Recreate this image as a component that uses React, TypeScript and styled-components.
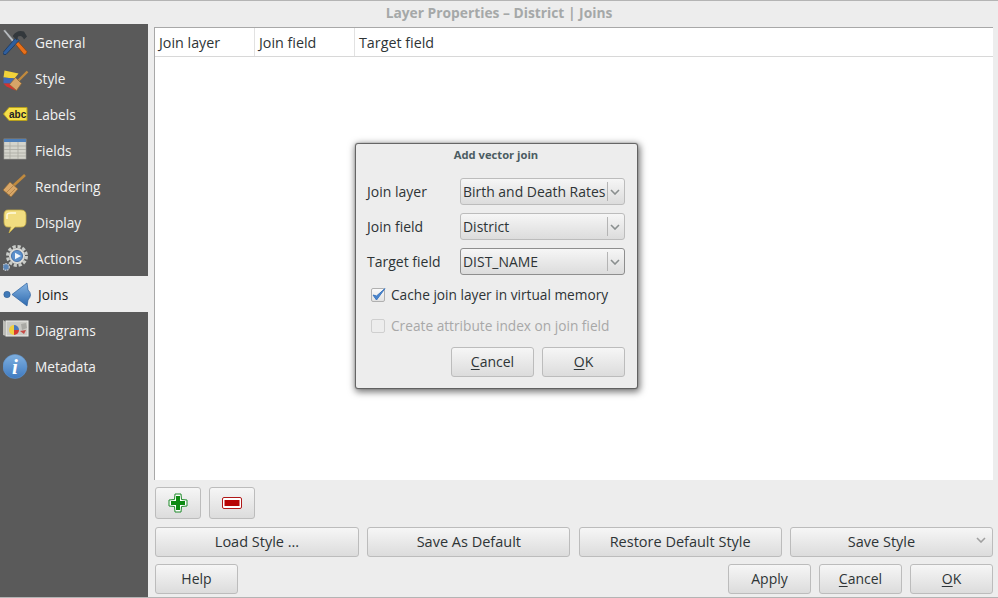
import styled, { createGlobalStyle } from 'styled-components'

const GlobalStyle = createGlobalStyle`
  html, body {
    margin: 0;
    padding: 0;
    background: #ededed;
  }
  body {
    font-family: "Open Sans", "Noto Sans", sans-serif;
    font-size: 13.7px;
    color: #2e3436;
  }
`

const GeneralIcon = () => (
  <svg width="28" height="28" viewBox="3 0.5 28 28">
    <path d="M3 2 L5 1 L17 15 L15 17 Z" fill="#b8bcc0" stroke="#555" strokeWidth="0.6" />
    <path d="M15 15 L18 13 L27 23 Q27 26 24 26 Z" fill="#e8701a" stroke="#8a3d08" strokeWidth="0.7" />
    <path d="M3 24 L16 9 L19 12 L6 26 Q3 27 3 24 Z" fill="#2f5f9e" stroke="#16325a" strokeWidth="0.7" />
    <path d="M13 7 Q17 1 24 3 L27 8 L24 11 Q22 6 18 8 L17 12 L13 8 Z" fill="#33383c" />
  </svg>
)

const StyleIcon = () => (
  <svg width="28" height="28" viewBox="2.5 -1.5 28 28">
    <path d="M4 4 L18 7 L14 12 L3 11 Z" fill="#f2d33a" />
    <path d="M3 11 L14 12 L13 17 L3 17 Z" fill="#3f69b5" />
    <path d="M3 17 L13 17 L15 24 L6 20 Z" fill="#d8322e" />
    <path d="M27 5 L18 14" stroke="#c08a3e" strokeWidth="2.4" />
    <path d="M15 11 L21 17 L16 24 L9 18 Z" fill="#d6a468" stroke="#8d6630" strokeWidth="0.7" />
  </svg>
)

const LabelsIcon = () => (
  <svg width="28" height="28" viewBox="0 0 28 28">
    <path d="M0.5 13 L6 6.5 H24 V19.5 H6 Z" fill="#f6e04a" stroke="#b7a01c" strokeWidth="1" />
    <text x="6" y="17" fontFamily="Liberation Sans, sans-serif" fontSize="10" fontWeight="700" fill="#222">abc</text>
  </svg>
)

const FieldsIcon = () => (
  <svg width="28" height="28" viewBox="3 1 28 28">
    <rect x="4" y="3" width="22" height="20" fill="#d4d4cc" stroke="#a5a5a0" strokeWidth="0.6" />
    <rect x="4" y="3" width="22" height="3" fill="#4f7fb8" />
    <path d="M4 10 H26 M4 13.5 H26 M4 17 H26 M4 20 H26 M10 6 V23 M18 6 V23" stroke="#a9a9a2" strokeWidth="0.8" />
  </svg>
)

const RenderingIcon = () => (
  <svg width="28" height="28" viewBox="3 1 28 28">
    <path d="M25 3 L13 14" stroke="#c08a3e" strokeWidth="2.6" />
    <path d="M10 10 L18 17 L11 25 L3 18 Z" fill="#d9a768" stroke="#8d6630" strokeWidth="0.7" />
    <path d="M6 21 L13 14 M9 23 L15 17" stroke="#a87a3e" strokeWidth="0.7" />
  </svg>
)

const DisplayIcon = () => (
  <svg width="28" height="28" viewBox="3 0 28 28">
    <path d="M8 1 H21 Q26 1 26 6 V13 Q26 18 21 18 H15 L9 24 L11 18 H8 Q4 18 4 13 V6 Q4 1 8 1 Z" fill="#f1dd80" stroke="#c7ae48" strokeWidth="0.8" />
    <path d="M7 10 V6 Q7 4 11 4 H16" stroke="#fffbe0" strokeWidth="1.4" fill="none" />
  </svg>
)

const ActionsIcon = () => (
  <svg width="28" height="28" viewBox="3 1 28 28">
    <circle cx="17" cy="12" r="9.5" fill="none" stroke="#c9ccc9" strokeWidth="3" strokeDasharray="3.2 1.8" />
    <circle cx="17" cy="12" r="8" fill="#d8d8d4" />
    <circle cx="17" cy="12" r="5.6" fill="#5b90cc" stroke="#2f5f9e" strokeWidth="0.7" />
    <path d="M15 8.8 L21 12 L15 15.2 Z" fill="#f2f6fb" />
    <circle cx="6" cy="23" r="3.3" fill="#5b86b8" stroke="#b9bdc2" strokeWidth="1.4" strokeDasharray="1.6 0.8" />
  </svg>
)

const JoinsIcon = () => (
  <svg width="32" height="28" viewBox="3 0 32 28">
    <defs>
      <linearGradient id="joinArrow" x1="0" y1="0" x2="0" y2="1">
        <stop offset="0" stopColor="#86b4e2" />
        <stop offset="1" stopColor="#2f6bb0" />
      </linearGradient>
    </defs>
    <circle cx="7" cy="13.5" r="3.2" fill="#3f79b8" stroke="#2a5788" strokeWidth="0.5" />
    <path d="M12 13.5 L27 2 L28 9 Q33 13.5 28 19 L27 25 Z" fill="url(#joinArrow)" stroke="#2a5f9e" strokeWidth="0.7" strokeLinejoin="round" />
  </svg>
)

const DiagramsIcon = () => (
  <svg width="28" height="28" viewBox="0 0 28 28">
    <rect x="3" y="4" width="22" height="15" fill="#c9c9c4" stroke="#f0f0ec" strokeWidth="1" />
    <path d="M3 5 L0 3 V18 L3 19 Z" fill="#bdbdb8" />
    <path d="M11 8 A5 5 0 0 0 11 18 V13 Z" fill="#f0d040" />
    <path d="M11 8 A5 5 0 0 1 16 13 H11 Z" fill="#4a78bc" />
    <path d="M11 13 H16 A5 5 0 0 1 11 18 Z" fill="#d63a30" />
    <path d="M18 7 L23 6 L24 11 L19 13 Z" fill="#a9a9a4" />
    <path d="M17 14 L23 13 L21 17 Z" fill="#c74a44" />
  </svg>
)

const MetadataIcon = () => (
  <svg width="28" height="28" viewBox="3 0.5 28 28">
    <defs>
      <linearGradient id="infoBall" x1="0" y1="0" x2="0" y2="1">
        <stop offset="0" stopColor="#7fb0e0" />
        <stop offset="1" stopColor="#3f7ac0" />
      </linearGradient>
    </defs>
    <circle cx="15" cy="14" r="12" fill="url(#infoBall)" stroke="#5f93cc" strokeWidth="0.6" />
    <text x="15" y="21" textAnchor="middle" fontFamily="Liberation Serif, serif" fontStyle="italic" fontWeight="700" fontSize="21" fill="#fff">i</text>
  </svg>
)

const Chevron = ({ color = '#8a8f8f' }: { color?: string }) => (
  <svg width="10" height="6" viewBox="0 0 10 6">
    <path d="M1 1 L5 5 L9 1" fill="none" stroke={color} strokeWidth="1.6" />
  </svg>
)

const PlusIcon = () => (
  <svg width="20" height="20" viewBox="0 0 20 20">
    <path d="M7 1 H13 L13.5 6.5 L19 7 V13 L13.5 13.5 L13 19 H7 L6.5 13.5 L1 13 V7 L6.5 6.5 Z" fill="#fff" stroke="#1f8a2a" strokeWidth="1" strokeLinejoin="round" />
    <path d="M8 3 H12 V8 H17 V12 H12 V17 H8 V12 H3 V8 H8 Z" fill="#0d8a12" />
  </svg>
)

const MinusIcon = () => (
  <svg width="20" height="12" viewBox="0 0 20 12">
    <rect x="0.5" y="0.5" width="19" height="11" rx="1.5" fill="#fff" stroke="#b01818" />
    <rect x="2.5" y="3" width="15" height="6" fill="#b80606" />
  </svg>
)

const CheckMark = () => (
  <svg width="14" height="14" viewBox="0 0 14 14" overflow="visible">
    <path d="M2 7 L5.5 12 L14 0.5 L5.5 8 Z" fill="#4a86cf" stroke="#3f78c0" strokeWidth="1" strokeLinejoin="round" />
  </svg>
)

const navItems = [
  { label: 'General', icon: <GeneralIcon /> },
  { label: 'Style', icon: <StyleIcon /> },
  { label: 'Labels', icon: <LabelsIcon /> },
  { label: 'Fields', icon: <FieldsIcon /> },
  { label: 'Rendering', icon: <RenderingIcon /> },
  { label: 'Display', icon: <DisplayIcon /> },
  { label: 'Actions', icon: <ActionsIcon /> },
  { label: 'Joins', icon: <JoinsIcon />, active: true },
  { label: 'Diagrams', icon: <DiagramsIcon /> },
  { label: 'Metadata', icon: <MetadataIcon /> },
]

function App() {
  return (
    <Window>
      <GlobalStyle />
      <TitleBar>Layer Properties – District | Joins</TitleBar>
      <Body>
        <Sidebar>
          {navItems.map((item) => (
            <NavItem key={item.label} $active={item.active}>
              <NavIcon>{item.icon}</NavIcon>
              <span>{item.label}</span>
            </NavItem>
          ))}
        </Sidebar>
        <Splitter />
        <Content>
          <Table>
            <TableHeader>
              <HeaderCell>Join layer</HeaderCell>
              <HeaderCell>Join field</HeaderCell>
              <HeaderCell>Target field</HeaderCell>
            </TableHeader>
          </Table>
          <ToolRow>
            <IconButton aria-label="Add"><PlusIcon /></IconButton>
            <IconButton aria-label="Remove"><MinusIcon /></IconButton>
          </ToolRow>
          <StyleRow>
            <StyleButton>Load Style ...</StyleButton>
            <StyleButton>Save As Default</StyleButton>
            <StyleButton>Restore Default Style</StyleButton>
            <StyleButton $menu>
              Save Style
              <MenuArrow><Chevron color="#a0a0a0" /></MenuArrow>
            </StyleButton>
          </StyleRow>
          <ActionRow>
            <DialogButton>Help</DialogButton>
            <ActionRight>
              <DialogButton>Apply</DialogButton>
              <DialogButton><u>C</u>ancel</DialogButton>
              <DialogButton><u>O</u>K</DialogButton>
            </ActionRight>
          </ActionRow>
        </Content>
      </Body>
      <JoinDialog>
        <DialogTitle>Add vector join</DialogTitle>
        <FormGrid>
          <FieldLabel>Join layer</FieldLabel>
          <Combo>
            <ComboText>Birth and Death Rates</ComboText>
            <ComboArrow><Chevron /></ComboArrow>
          </Combo>
          <FieldLabel>Join field</FieldLabel>
          <Combo>
            <ComboText>District</ComboText>
            <ComboArrow><Chevron /></ComboArrow>
          </Combo>
          <FieldLabel>Target field</FieldLabel>
          <Combo $focused>
            <ComboText>DIST_NAME</ComboText>
            <ComboArrow><Chevron /></ComboArrow>
          </Combo>
        </FormGrid>
        <CheckRow>
          <CheckBox><CheckMark /></CheckBox>
          Cache join layer in virtual memory
        </CheckRow>
        <CheckRow $disabled>
          <CheckBox $disabled />
          Create attribute index on join field
        </CheckRow>
        <DialogActions>
          <DialogButton><u>C</u>ancel</DialogButton>
          <DialogButton><u>O</u>K</DialogButton>
        </DialogActions>
      </JoinDialog>
    </Window>
  )
}

const Window = styled.div`
  position: relative;
  width: 998px;
  height: 598px;
  box-sizing: border-box;
  overflow: hidden;
  display: flex;
  flex-direction: column;
  background: #ededed;
  border-bottom: 1px solid #b4b4b4;
`

const TitleBar = styled.div`
  height: 22px;
  flex: none;
  padding-bottom: 1px;
  border-top: 1px solid #b4b4b4;
  display: flex;
  align-items: center;
  justify-content: center;
  font-weight: 700;
  font-size: 13.8px;
  color: #a5a8a8;
`

const Body = styled.div`
  flex: 1;
  display: flex;
  min-height: 0;
`

const Sidebar = styled.nav`
  width: 148px;
  flex: none;
  background: #5a5a5a;
`

const NavItem = styled.div<{ $active?: boolean }>`
  height: 36px;
  display: flex;
  align-items: center;
  gap: ${(p) => (p.$active ? '3px' : '4px')};
  padding-left: 3px;
  box-sizing: border-box;
  background: ${(p) => (p.$active ? '#ededed' : 'transparent')};
  color: ${(p) => (p.$active ? '#1c1c1c' : '#f2f2f2')};
`

const NavIcon = styled.span`
  display: flex;
  flex: none;
  min-width: 28px;
  height: 28px;
  margin-top: 2px;
`

const Splitter = styled.div`
  width: 6px;
  flex: none;
  background-image: radial-gradient(#d2d2d2 0.6px, transparent 0.7px);
  background-size: 2px 2px;
`

const Content = styled.div`
  flex: 1;
  min-width: 0;
  display: flex;
  flex-direction: column;
  padding: 3px 5px 3px 0;
`

const Table = styled.div`
  height: 453px;
  flex: none;
  box-sizing: border-box;
  background: #fff;
  border-top: 1px solid #a8a8a8;
  border-left: 1px solid #a8a8a8;
`

const TableHeader = styled.div`
  height: 28px;
  display: flex;
  border-bottom: 1px solid #d8d8d8;
`

const HeaderCell = styled.div`
  width: 100px;
  box-sizing: border-box;
  padding-left: 4px;
  display: flex;
  align-items: center;
  border-right: 1px solid #e2e2e2;
  color: #2e3436;
  font-size: 14.3px;

  &:last-child {
    flex: 1;
    border-right: none;
  }
`

const PushButton = styled.button`
  position: relative;
  height: 30px;
  box-sizing: border-box;
  padding: 0;
  border: 1px solid #bcbcbc;
  border-radius: 3px;
  background: linear-gradient(#f6f6f6, #dcdcdc);
  color: #2e3436;
  font: inherit;
  display: flex;
  align-items: center;
  justify-content: center;

  u {
    text-underline-offset: 2px;
  }
`

const ToolRow = styled.div`
  display: flex;
  gap: 8px;
  margin: 7px 0 8px 1px;
`

const IconButton = styled(PushButton)`
  width: 46px;
  height: 32px;
`

const StyleRow = styled.div`
  display: grid;
  grid-template-columns: 204px 203px 203px 203px;
  justify-content: space-between;
  margin-left: 1px;
`

const StyleButton = styled(PushButton)<{ $menu?: boolean }>`
  font-size: 14.5px;
  padding: 0 ${(p) => (p.$menu ? '20px' : '0')} 2px 0;
`

const MenuArrow = styled.span`
  position: absolute;
  right: 6px;
  top: 9px;
  display: flex;
`

const DialogButton = styled(PushButton)`
  width: 83px;
  font-size: 14px;
  padding-bottom: 2px;
`

const ActionRow = styled.div`
  display: flex;
  justify-content: space-between;
  margin: 7px 0 0 1px;
`

const ActionRight = styled.div`
  display: flex;
  gap: 8px;
`

const JoinDialog = styled.div`
  position: absolute;
  left: 356px;
  top: 144px;
  width: 281px;
  height: 244px;
  box-sizing: border-box;
  padding: 0 12px 0 11px;
  background: #ededed;
  border-radius: 2px;
  box-shadow: 0 0 1px 1px #5c5c5c, 1px 2px 7px 2px rgba(0, 0, 0, 0.55);
  display: flex;
  flex-direction: column;
`

const DialogTitle = styled.div`
  height: 21px;
  display: flex;
  align-items: center;
  justify-content: center;
  font-size: 11.2px;
  font-weight: 700;
  color: #4b5c62;
`

const FormGrid = styled.div`
  display: grid;
  grid-template-columns: 93px 165px;
  grid-auto-rows: 27px;
  row-gap: 8px;
  align-items: center;
  margin: 13px 0 4px;
`

const FieldLabel = styled.div`
  color: #2e3436;
  font-size: 14px;
`

const Combo = styled.div<{ $focused?: boolean }>`
  height: 27px;
  box-sizing: border-box;
  display: flex;
  align-items: center;
  border: 1px solid ${(p) => (p.$focused ? '#8e8e8e' : '#bcbcbc')};
  border-radius: 3px;
  background: linear-gradient(#f6f6f6, #dcdcdc);
  font-size: 13.95px;
`

const ComboText = styled.span`
  flex: 1;
  min-width: 0;
  padding-left: 2px;
  white-space: nowrap;
  overflow: hidden;
`

const ComboArrow = styled.span`
  flex: none;
  width: 17px;
  height: 19px;
  box-sizing: border-box;
  padding-right: 2px;
  border-left: 1px solid #b4b4b4;
  display: flex;
  align-items: center;
  justify-content: center;
`

const CheckRow = styled.div<{ $disabled?: boolean }>`
  height: 31px;
  display: flex;
  align-items: center;
  gap: 6px;
  padding-left: 4px;
  color: ${(p) => (p.$disabled ? '#a8a8a8' : '#2e3436')};
`

const CheckBox = styled.span<{ $disabled?: boolean }>`
  width: 12px;
  height: 12px;
  flex: none;
  display: flex;
  align-items: center;
  justify-content: center;
  border: 1px solid ${(p) => (p.$disabled ? '#cfcfcf' : '#b0b0b0')};
  border-radius: 2px;
  background: ${(p) => (p.$disabled ? '#ededed' : 'linear-gradient(#fafafa, #e2e2e2)')};
`

const DialogActions = styled.div`
  display: flex;
  justify-content: flex-end;
  gap: 8px;
  margin-top: 6px;
`

export default App
